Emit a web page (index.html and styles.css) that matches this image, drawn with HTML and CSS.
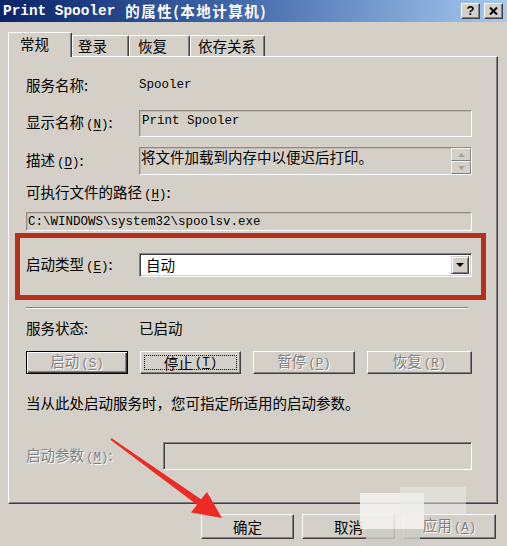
FILE: index.html
```html
<!DOCTYPE html>
<html lang="zh-CN">
<head>
<meta charset="utf-8">
<title>Print Spooler 的属性</title>
<link rel="stylesheet" href="styles.css">
</head>
<body>
<div class="window">
  <div class="titlebar">
    <span class="title"><span class="title-lat">Print Spooler</span><span class="title-cjk">的属性(本地计算机)</span></span>
    <div class="tb-btns">
      <span class="tb-btn help">?</span>
      <span class="tb-btn">
        <svg width="9" height="8" viewBox="0 0 9 8"><path d="M1 0.5 L8 7.5 M8 0.5 L1 7.5" stroke="#000" stroke-width="2"/></svg>
      </span>
    </div>
  </div>

  <div class="tabs">
    <div class="tab active t1">常规</div>
    <div class="tab t2">登录</div>
    <div class="tab t3">恢复</div>
    <div class="tab t4">依存关系</div>
  </div>

  <div class="panel">
    <div class="row r-name">
      <span class="label">服务名称:</span>
      <span class="lat">Spooler</span>
    </div>
    <div class="row r-disp">
      <span class="label">显示名称<span class="ak">(<u>N</u>)</span>:</span>
      <div class="field grow disp"><span class="lat">Print Spooler</span></div>
    </div>
    <div class="row r-desc">
      <span class="label">描述<span class="ak">(<u>D</u>)</span>:</span>
      <div class="field grow desc">
        <span class="desc-text">将文件加载到内存中以便迟后打印。</span>
        <div class="scroll">
          <div class="sbtn"><svg width="7" height="4" viewBox="0 0 7 4"><path d="M3.5 0 L7 4 L0 4Z" fill="#a8a49c"/></svg></div>
          <div class="sbtn"><svg width="7" height="4" viewBox="0 0 7 4"><path d="M0 0 L7 0 L3.5 4Z" fill="#a8a49c"/></svg></div>
        </div>
      </div>
    </div>
    <div class="row r-pathlabel">
      <span>可执行文件的路径<span class="ak">(<u>H</u>)</span>:</span>
    </div>
    <div class="row r-path">
      <div class="field grow path"><span class="lat">C:\WINDOWS\system32\spoolsv.exe</span></div>
    </div>
    <div class="row r-type">
      <span class="label">启动类型<span class="ak">(<u>E</u>)</span>:</span>
      <div class="combo grow">
        <span class="combo-text">自动</span>
        <div class="combo-btn"><svg width="8" height="4" viewBox="0 0 8 4"><path d="M0 0 L8 0 L4 4Z" fill="#000"/></svg></div>
      </div>
    </div>
    <div class="sep"></div>
    <div class="row r-status">
      <span class="label">服务状态:</span>
      <span>已启动</span>
    </div>
    <div class="row r-btns">
      <div class="btn default w1"><span class="dis">启动<span class="ak">(<u>S</u>)</span></span></div>
      <div class="btn w2"><div class="focus">停止<span class="ak">(<u>T</u>)</span></div></div>
      <div class="btn w3"><span class="dis">暂停<span class="ak">(<u>P</u>)</span></span></div>
      <div class="btn w4"><span class="dis">恢复<span class="ak">(<u>R</u>)</span></span></div>
    </div>
    <div class="row r-hint">
      <span>当从此处启动服务时，您可指定所适用的启动参数。</span>
    </div>
    <div class="row r-param">
      <span class="label2 dis">启动参数<span class="ak">(<u>M</u>)</span>:</span>
      <div class="field grow param"></div>
    </div>
  </div>

  <div class="footer">
    <div class="btn fbtn">确定</div>
    <div class="btn fbtn">取消</div>
    <div class="btn fbtn"><span class="dis">应用<span class="ak">(<u>A</u>)</span></span></div>
  </div>
</div>

<div class="redframe"></div>

<svg class="arrow" width="507" height="546" viewBox="0 0 507 546">
  <polygon points="111.6,438.2 201,499.2 207,492 222,518 191,512.5 197,504.8 110.4,439.8" fill="#ec2b25"/>
</svg>

<div class="blur b1"></div>
<div class="blur b2"></div>
<div class="blur b3"></div>
</body>
</html>
```

FILE: styles.css
```css
* { box-sizing: border-box; margin: 0; padding: 0; }

html, body {
  width: 507px;
  height: 546px;
  overflow: hidden;
}

body {
  position: relative;
  background: #d4d0c8;
  font-family: "Noto Sans CJK SC", "Noto Sans", sans-serif;
  font-size: 14.5px;
  line-height: 18px;
  color: #000;
}

.lat {
  font-family: "Liberation Mono", monospace;
  font-size: 12.5px;
}

.ak {
  font-family: "Liberation Mono", monospace;
  font-size: 12.5px;
  margin-left: 2px;
}

.ak u { text-underline-offset: 2px; }

/* title bar */
.titlebar {
  height: 22px;
  display: flex;
  align-items: center;
  padding-left: 3px;
  background: linear-gradient(90deg, #0a246a 0%, #3f65a8 45%, #a6caf0 100%);
  color: #fff;
  font-weight: bold;
}

.title { font-size: 14.5px; white-space: nowrap; display: flex; align-items: center; }

.title-lat {
  font-family: "Liberation Mono", monospace;
  font-size: 14.4px;
  font-weight: bold;
}

.title-cjk {
  margin-left: 10px;
  letter-spacing: 1.5px;
}

.tb-btns {
  margin-left: auto;
  margin-right: 4px;
  display: flex;
  gap: 4px;
}

.tb-btn {
  width: 19px;
  height: 16px;
  background: #d4d0c8;
  border: 1px solid;
  border-color: #fff #404040 #404040 #fff;
  box-shadow: inset -1px -1px 0 #808080;
  display: flex;
  align-items: center;
  justify-content: center;
  color: #000;
}

.tb-btn.help {
  font-family: "Liberation Sans", sans-serif;
  font-size: 13px;
  font-weight: bold;
  line-height: 14px;
}

/* tabs */
.tabs {
  margin-top: 10px;
  height: 24px;
  padding-left: 8px;
  display: flex;
  align-items: flex-end;
}

.tab {
  position: relative;
  height: 21px;
  border-top: 1px solid #fff;
  border-left: 1px solid #fff;
  border-right: 1px solid #404040;
  box-shadow: inset -1px 0 0 #808080;
  border-radius: 2px 2px 0 0;
  background: #d4d0c8;
  display: flex;
  align-items: center;
  line-height: 18px;
}

.tab.active {
  height: 25px;
  margin-bottom: -1px;
  z-index: 1;
  padding-bottom: 2px;
}

.t1 { width: 64px; padding-left: 11px; }
.t2 { width: 57px; padding-left: 5px; }
.t3 { width: 61px; padding-left: 8px; }
.t4 { width: 75px; padding-left: 7px; }

/* panel */
.panel {
  margin-left: 8px;
  width: 490px;
  height: 448px;
  border-top: 1px solid #fff;
  border-left: 1px solid #fff;
  border-right: 1px solid #404040;
  border-bottom: 1px solid #404040;
  box-shadow: inset -1px -1px 0 #808080;
  padding: 19px 25px 0 17px;
  display: flex;
  flex-direction: column;
}

.row {
  display: flex;
  align-items: center;
  flex-shrink: 0;
}

.label { width: 113px; flex-shrink: 0; white-space: nowrap; }
.label2 { width: 137px; flex-shrink: 0; white-space: nowrap; }
.grow { flex: 1; }

.r-name { height: 18px; }
.r-disp { margin-top: 16px; height: 27px; }
.r-desc { margin-top: 10px; height: 28px; }
.r-pathlabel { margin-top: 9px; height: 18px; }
.r-path { margin-top: 10px; height: 19px; }
.r-type { margin-top: 22px; height: 24px; }
.sep {
  margin-top: 30px;
  width: 442px;
  height: 2px;
  border-top: 1px solid #808080;
  border-bottom: 1px solid #fff;
  flex-shrink: 0;
}
.r-status { margin-top: 10px; height: 18px; }
.r-btns { margin-top: 14px; height: 23px; justify-content: space-between; }
.r-hint { margin-top: 20px; height: 18px; }
.r-param { margin-top: 30px; height: 28px; }

/* fields */
.field {
  height: 100%;
  border: 1px solid;
  border-color: #8e8b85 #fff #fff #8e8b85;
  box-shadow: inset 1px 1px 0 #bebab2;
  background: #d4d0c8;
  display: flex;
}

.disp { padding: 2px 0 0 2px; align-items: flex-start; line-height: 16px; }
.desc { padding-left: 1px; align-items: flex-start; }
.desc-text { flex: 1; line-height: 18px; }
.path { padding-left: 1px; align-items: center; line-height: 16px; }

.scroll {
  width: 20px;
  height: 100%;
  display: flex;
  flex-direction: column;
}

.sbtn {
  flex: 1;
  border: 1px solid;
  border-color: #f4f3f0 #808080 #808080 #f4f3f0;
  background: #d4d0c8;
  display: flex;
  align-items: center;
  justify-content: center;
}

.combo {
  height: 100%;
  border: 1px solid;
  border-color: #808080 #fff #fff #808080;
  box-shadow: inset 1px 1px 0 #404040, inset -1px -1px 0 #d4d0c8;
  background: #fff;
  display: flex;
  align-items: center;
  padding: 2px 2px 2px 6px;
}

.combo-text { flex: 1; line-height: 18px; }

.combo-btn {
  width: 18px;
  height: 100%;
  background: #d4d0c8;
  border: 1px solid;
  border-color: #d4d0c8 #404040 #404040 #d4d0c8;
  box-shadow: inset 1px 1px 0 #fff, inset -1px -1px 0 #808080;
  display: flex;
  align-items: center;
  justify-content: center;
}

.param {
  border-color: #808080 #fff #fff #808080;
  box-shadow: inset 1px 1px 0 #404040, inset -1px -1px 0 #d4d0c8;
}

/* buttons */
.btn {
  height: 100%;
  background: #d4d0c8;
  border: 1px solid;
  border-color: #fff #404040 #404040 #fff;
  box-shadow: inset -1px -1px 0 #808080;
  display: flex;
  align-items: center;
  justify-content: center;
  white-space: nowrap;
}

.btn.default {
  border-color: #000;
  box-shadow: inset 1px 1px 0 #fff, inset -1px -1px 0 #404040, inset -2px -2px 0 #808080;
}

.w1 { width: 102px; }
.w2 { width: 101px; padding: 3px; }
.w3 { width: 102px; }
.w4 { width: 105px; }

.focus {
  width: 100%;
  height: 100%;
  border: 1px dotted #000;
  display: flex;
  align-items: center;
  justify-content: center;
}

.dis {
  color: #808080;
  text-shadow: 1px 1px 0 #fff;
}

/* footer */
.footer {
  margin-top: 10px;
  height: 25px;
  display: flex;
  justify-content: flex-end;
  gap: 8px;
  padding-right: 11px;
}

.fbtn { width: 93px; }

/* annotations overlaid on the screenshot */
.redframe {
  position: absolute;
  left: 15px;
  top: 233px;
  width: 471px;
  height: 67px;
  border: 5px solid #b3301d;
}

.arrow {
  position: absolute;
  left: 0;
  top: 0;
  pointer-events: none;
}

.blur { position: absolute; }
.b1 { left: 360px; top: 493px; width: 64px; height: 36px; background: rgba(242, 241, 238, 0.88); }
.b2 { left: 366px; top: 529px; width: 54px; height: 17px; background: rgba(205, 203, 199, 0.85); }
.b3 { left: 400px; top: 487px; width: 66px; height: 28px; background: rgba(236, 235, 232, 0.5); }
```
